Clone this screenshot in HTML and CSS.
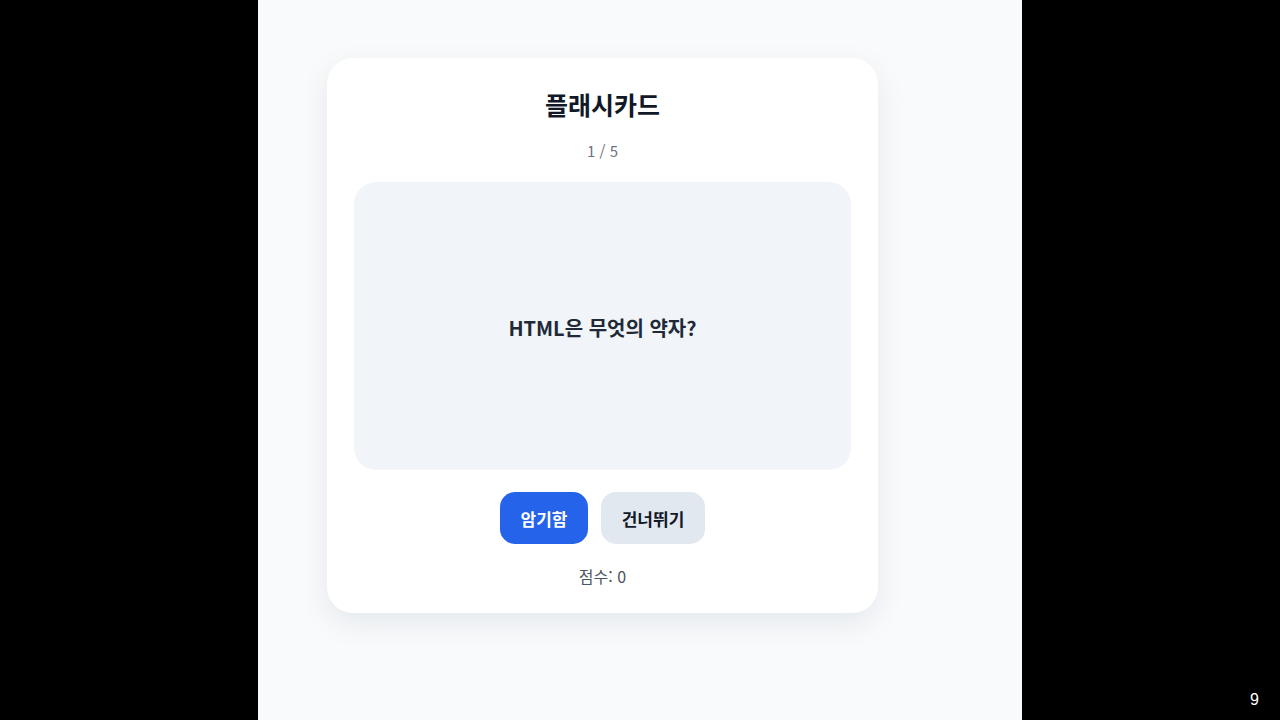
FILE: index.html
```html
<!DOCTYPE html>
<html lang="ko">
<head>
<meta charset="utf-8">
<title>플래시카드</title>
<link rel="stylesheet" href="styles.css">
</head>
<body>
<div class="stage">
  <main class="card">
    <h1 class="title">플래시카드</h1>
    <div class="progress">1 / 5</div>
    <section class="face">
      <p class="question">HTML은 무엇의 약자?</p>
    </section>
    <div class="actions">
      <button class="btn btn-primary">암기함</button>
      <button class="btn btn-secondary">건너뛰기</button>
    </div>
    <div class="score">점수: 0</div>
  </main>
</div>
<div class="page-num">9</div>
</body>
</html>
```

FILE: styles.css
```css
* { box-sizing: border-box; }
html, body { margin: 0; padding: 0; }
body {
  width: 1280px;
  height: 720px;
  background: #000;
  display: flex;
  justify-content: center;
  font-family: "Noto Sans CJK KR", "Noto Sans", sans-serif;
  overflow: hidden;
}
.stage {
  width: 764px;
  height: 720px;
  background: #f8fafc;
  padding: 58px 0 0 69px;
}
.card {
  width: 551px;
  height: 555px;
  background: #fff;
  border-radius: 26px;
  box-shadow: 0 10px 30px rgba(15, 23, 42, 0.08);
  padding: 30px 27px 0;
  display: flex;
  flex-direction: column;
  align-items: stretch;
}
.title {
  margin: 0;
  text-align: center;
  font-size: 25px;
  line-height: 32px;
  font-weight: 700;
  color: #111827;
}
.progress {
  margin-top: 20px;
  text-align: center;
  font-size: 15px;
  line-height: 22px;
  color: #6b7280;
}
.face {
  margin-top: 20px;
  height: 288px;
  background: #f1f5f9;
  border-radius: 22px;
  display: flex;
  align-items: center;
  justify-content: center;
  padding-top: 4px;
}
.question {
  margin: 0;
  font-size: 20px;
  line-height: 26px;
  font-weight: 700;
  color: #1f2937;
}
.actions {
  margin-top: 22px;
  display: flex;
  justify-content: center;
  gap: 13px;
}
.btn {
  height: 52px;
  border: none;
  border-radius: 15px;
  font-family: inherit;
  font-size: 17px;
  font-weight: 700;
  padding: 0 18px;
}
.btn-primary {
  width: 88px;
  background: #2563eb;
  color: #fff;
}
.btn-secondary {
  width: 104px;
  background: #e2e8f0;
  color: #111827;
}
.score {
  margin-top: 20px;
  text-align: center;
  font-size: 16px;
  line-height: 24px;
  color: #4b5563;
}
.page-num {
  position: absolute;
  left: 1250px;
  top: 689px;
  color: #fff;
  font-family: "Liberation Sans", sans-serif;
  font-size: 16px;
  line-height: 22px;
}
```
